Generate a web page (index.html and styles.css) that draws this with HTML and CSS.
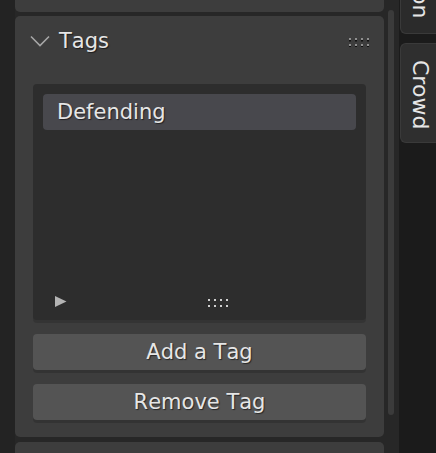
FILE: index.html
```html
<!DOCTYPE html>
<html>
<head>
<meta charset="utf-8">
<link rel="stylesheet" href="styles.css">
</head>
<body>
<div class="app">
  <div class="region">
    <div class="panels">
      <div class="panel panel-top"></div>
      <div class="panel panel-tags">
        <div class="panel-header">
          <svg class="chevron" width="20" height="12" viewBox="0 0 20 12"><polyline points="1,1.5 10,10.5 19,1.5" fill="none" stroke="#a6a6a6" stroke-width="1.6"/></svg>
          <span class="title">Tags</span>
          <svg class="grip grip-head" width="21" height="9" viewBox="0 0 21 9">
            <g fill="#111"><rect x="0" y="2" width="2" height="1.5"/><rect x="6" y="2" width="2" height="1.5"/><rect x="12" y="2" width="2" height="1.5"/><rect x="18" y="2" width="2" height="1.5"/><rect x="0" y="8" width="2" height="1.5"/><rect x="6" y="8" width="2" height="1.5"/><rect x="12" y="8" width="2" height="1.5"/><rect x="18" y="8" width="2" height="1.5"/></g>
            <g fill="#8f8f8f"><rect x="0" y="0" width="2" height="2"/><rect x="6" y="0" width="2" height="2"/><rect x="12" y="0" width="2" height="2"/><rect x="18" y="0" width="2" height="2"/><rect x="0" y="6" width="2" height="2"/><rect x="6" y="6" width="2" height="2"/><rect x="12" y="6" width="2" height="2"/><rect x="18" y="6" width="2" height="2"/></g>
          </svg>
        </div>
        <div class="panel-body">
          <div class="list">
            <div class="list-item">Defending</div>
            <div class="list-footer">
              <svg class="tri" width="12" height="11" viewBox="0 0 12 11"><polygon points="0,0 11.5,5.5 0,11" fill="#b4b4b4"/></svg>
              <svg class="grip grip-list" width="20" height="8" viewBox="0 0 20 8">
                <g fill="#cfcfcf"><rect x="0" y="0" width="2" height="2"/><rect x="6" y="0" width="2" height="2"/><rect x="12" y="0" width="2" height="2"/><rect x="18" y="0" width="2" height="2"/><rect x="0" y="6" width="2" height="2"/><rect x="6" y="6" width="2" height="2"/><rect x="12" y="6" width="2" height="2"/><rect x="18" y="6" width="2" height="2"/></g>
              </svg>
            </div>
          </div>
          <button class="btn">Add a Tag</button>
          <button class="btn">Remove Tag</button>
        </div>
      </div>
      <div class="panel panel-next"></div>
    </div>
    <div class="scroll-track"><div class="scrollbar"></div></div>
  </div>
  <div class="tabs">
    <div class="tab tab-cut"><span class="tab-label">on</span></div>
    <div class="tab tab-active"><span class="tab-label">Crowd</span></div>
  </div>
</div>
</body>
</html>
```

FILE: styles.css
```css
* { box-sizing: border-box; }

html, body {
  margin: 0;
  padding: 0;
  width: 436px;
  height: 453px;
  overflow: hidden;
  background: #1d1d1d;
  font-family: "DejaVu Sans", sans-serif;
  font-kerning: none;
  color: #e6e6e6;
}

.app {
  display: flex;
  height: 453px;
}

.region {
  width: 399px;
  height: 100%;
  display: flex;
  background: #272727;
  border-left: 15px solid #232323;
}

.panels {
  width: 369px;
  display: flex;
  flex-direction: column;
}

.panel {
  background: #3d3d3d;
}

.panel-top {
  height: 12px;
  border-radius: 0 0 5px 5px;
  margin-bottom: 4px;
}

.panel-tags {
  height: 421px;
  border-radius: 5px;
  margin-bottom: 5px;
  display: flex;
  flex-direction: column;
}

.panel-next {
  flex: 1;
  border-radius: 5px 5px 0 0;
}

.panel-header {
  height: 50px;
  display: flex;
  align-items: center;
  padding: 0 14px 0 15px;
}

.chevron {
  display: block;
}

.title {
  margin-left: 9px;
  font-size: 21px;
  line-height: 1;
  text-shadow: 1px 1px 1px rgba(0, 0, 0, 0.55);
}

.grip {
  display: block;
}

.grip-head {
  margin-left: auto;
  margin-top: 2px;
}

.panel-body {
  padding: 18px 18px 0 18px;
  display: flex;
  flex-direction: column;
}

.list {
  height: 236px;
  background: #2d2d2d;
  border-radius: 4px;
  padding: 10px 10px 13px 10px;
  display: flex;
  flex-direction: column;
  box-shadow: 0 3px 0 rgba(0, 0, 0, 0.14);
}

.list-item {
  height: 36px;
  background: #48484d;
  border-radius: 4px;
  padding-left: 14px;
  display: flex;
  align-items: center;
  font-size: 21px;
  text-shadow: 1px 1px 1px rgba(0, 0, 0, 0.55);
}

.list-footer {
  margin-top: auto;
  height: 12px;
  display: flex;
  align-items: center;
  padding-left: 12px;
}

.tri {
  display: block;
}

.grip-list {
  margin-left: 141px;
  margin-top: 4px;
}

.btn {
  margin-top: 14px;
  height: 36px;
  width: 100%;
  border: none;
  border-radius: 4px;
  background: #545454;
  color: #e6e6e6;
  font-family: "DejaVu Sans", sans-serif;
  font-kerning: none;
  font-size: 21px;
  padding: 0;
  text-shadow: 1px 1px 1px rgba(0, 0, 0, 0.55);
  box-shadow: 0 3px 0 rgba(0, 0, 0, 0.15);
}

.scroll-track {
  width: 15px;
  padding: 10px 5px 0 4px;
}

.scrollbar {
  width: 6px;
  height: 405px;
  border-radius: 3px;
  background: #3b3b3b;
}

.tabs {
  width: 37px;
  height: 100%;
  background: #1b1b1b;
  display: flex;
  flex-direction: column;
}

.tab {
  background: #2b2b2b;
  border: 1px solid #3a3a3a;
  border-right: none;
  border-radius: 6px 0 0 6px;
  margin-left: 1px;
  display: flex;
  flex-direction: column;
  align-items: center;
}

.tab-cut {
  height: 34px;
  border-top: none;
  border-radius: 0 0 0 6px;
  justify-content: flex-end;
  padding-bottom: 15px;
  overflow: hidden;
}

.tab-active {
  margin-top: 9px;
  height: 100px;
  background: #2f2f2f;
  padding-top: 16px;
}

.tab-label {
  writing-mode: vertical-rl;
  font-size: 22px;
  line-height: 1;
  color: #e6e6e6;
  margin-left: 2px;
}
```
